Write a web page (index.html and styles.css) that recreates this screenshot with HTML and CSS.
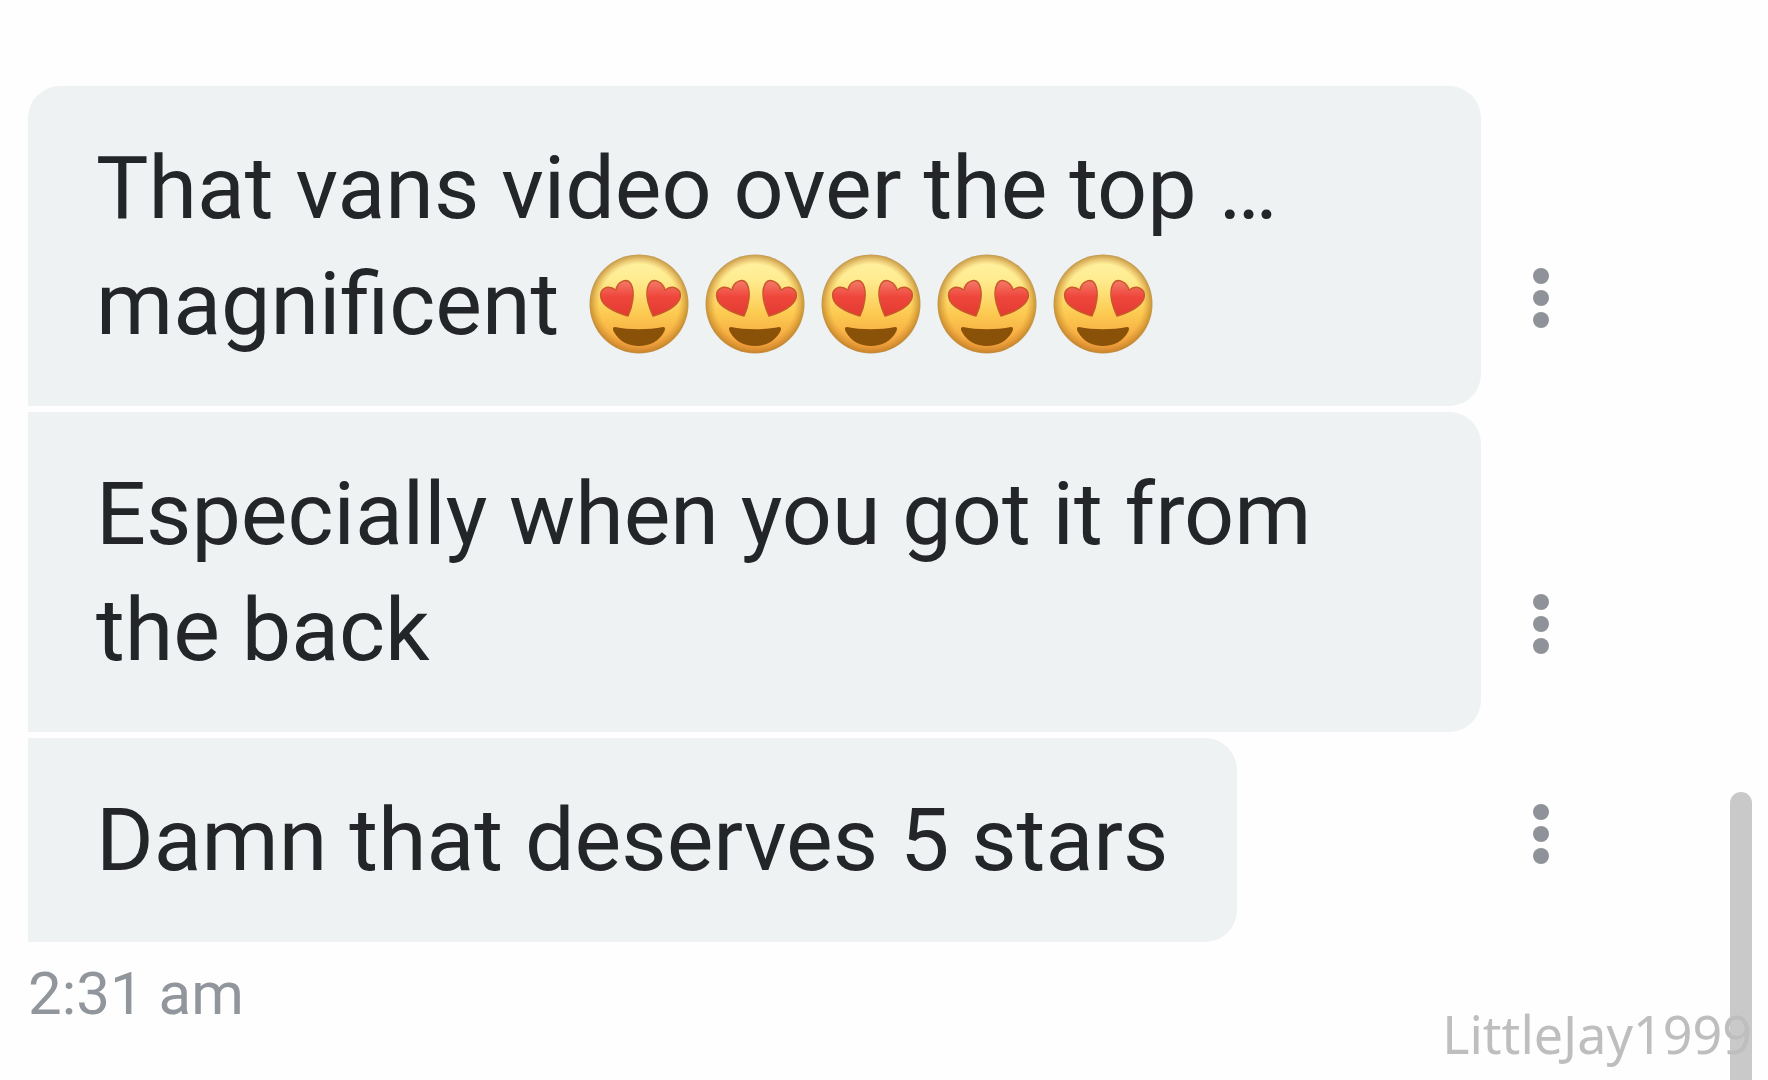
FILE: index.html
```html
<!DOCTYPE html>
<html lang="en">
<head>
    <meta charset="UTF-8">
    <meta name="viewport" content="width=device-width, initial-scale=1.0">
    <title>Messages</title>
    <link rel="stylesheet" href="styles.css">
</head>
<body>

<!-- shared drawing for the heart eyes emoji -->
<svg class="defs" width="0" height="0" aria-hidden="true">
    <defs>
        <linearGradient id="face" x1="0" y1="0" x2="0" y2="1">
            <stop offset="0" stop-color="#fff3a6"/>
            <stop offset="0.25" stop-color="#ffec90"/>
            <stop offset="0.6" stop-color="#fcca50"/>
            <stop offset="1" stop-color="#f3993a"/>
        </linearGradient>
        <radialGradient id="edge">
            <stop offset="0.8" stop-color="#d98a28" stop-opacity="0"/>
            <stop offset="1" stop-color="#b07a26" stop-opacity="0.75"/>
        </radialGradient>
        <linearGradient id="heart" x1="0" y1="0" x2="0" y2="1">
            <stop offset="0" stop-color="#f27a68"/>
            <stop offset="0.45" stop-color="#f0473d"/>
            <stop offset="1" stop-color="#e23a30"/>
        </linearGradient>
        <symbol id="heart-eyes" viewBox="0 0 100 100">
            <circle cx="50" cy="50" r="49" fill="url(#face)"/>
            <circle cx="50" cy="50" r="49.5" fill="url(#edge)"/>
            <g fill="url(#heart)" stroke="#c9572b" stroke-width="1.5" stroke-linejoin="round">
                <path d="M39 62C29 59 14 53 12 44C10 35 18 30 27 36C28 28 38 23 42 30C46 38 44 51 39 62Z"/>
                <path d="M64 62C74 59 88 53 91 44C93 35 84 30 76 36C74 28 64 23 60 30C56 38 59 51 64 62Z"/>
            </g>
            <path d="M26 73C40 76 60 76 74 73C77 73 76 76 75 78C70 87 61 92 50 92C39 92 30 87 25 78C24 76 23 73 26 73Z" fill="#8a5109"/>
        </symbol>
    </defs>
</svg>

<main class="thread">
    <div class="row">
        <div class="bubble first">That vans video over the top … magnificent <span class="emojis" role="img" aria-label="heart eyes"><svg class="emoji"><use href="#heart-eyes"/></svg><svg class="emoji"><use href="#heart-eyes"/></svg><svg class="emoji"><use href="#heart-eyes"/></svg><svg class="emoji"><use href="#heart-eyes"/></svg><svg class="emoji"><use href="#heart-eyes"/></svg></span></div>
        <button class="more" type="button" aria-label="Message options">
            <svg class="dots" viewBox="0 0 16 60"><circle cx="8" cy="8" r="8"/><circle cx="8" cy="30" r="8"/><circle cx="8" cy="52" r="8"/></svg>
        </button>
    </div>
    <div class="row">
        <div class="bubble">Especially when you got it from the back</div>
        <button class="more" type="button" aria-label="Message options">
            <svg class="dots" viewBox="0 0 16 60"><circle cx="8" cy="8" r="8"/><circle cx="8" cy="30" r="8"/><circle cx="8" cy="52" r="8"/></svg>
        </button>
    </div>
    <div class="row">
        <div class="bubble">Damn that deserves 5 stars</div>
        <button class="more" type="button" aria-label="Message options">
            <svg class="dots" viewBox="0 0 16 60"><circle cx="8" cy="8" r="8"/><circle cx="8" cy="30" r="8"/><circle cx="8" cy="52" r="8"/></svg>
        </button>
    </div>
    <time class="time">2:31 am</time>
</main>

<div class="scroll-thumb"></div>
<div class="watermark">LittleJay1999</div>

</body>
</html>
```
FILE: styles.css
```css
* {
    box-sizing: border-box;
}
body {
    margin: 0;
    min-height: 100vh;
    background-color: #fefefe;
    color: #242529;
    font-family: Roboto, "Liberation Sans", sans-serif;
    overflow: hidden;
}
.defs {
    position: absolute;
}
.thread {
    display: flex;
    flex-direction: column;
    gap: 6px;
    padding: 86px 197px 0 28px;
}
.row {
    display: flex;
    align-items: flex-end;
    justify-content: space-between;
    gap: 30px;
}
.bubble {
    padding: 44px 68px;
    background-color: #eef2f3;
    border-radius: 0 32px 32px 0;
    font-size: 88px;
    line-height: 116px;
}
.bubble.first {
    border-top-left-radius: 32px;
}
.emojis {
    white-space: nowrap;
}
.emoji {
    width: 100px;
    height: 100px;
    margin: 0 8px;
    vertical-align: -20px;
}
.more {
    flex: none;
    display: flex;
    align-items: center;
    justify-content: center;
    width: 60px;
    height: 120px;
    margin-bottom: 48px;
    padding: 0;
    border: 0;
    background: none;
    cursor: pointer;
}
.dots {
    width: 16px;
    height: 60px;
    fill: #8f9399;
}
.time {
    margin-top: 10px;
    color: #90969c;
    font-size: 60px;
    line-height: 72px;
}
/* overlays */
.scroll-thumb {
    position: fixed;
    top: 792px;
    right: 16px;
    bottom: 0;
    width: 22px;
    border-radius: 11px 11px 0 0;
    background-color: #c9c9c9;
}
.watermark {
    position: fixed;
    right: 16px;
    bottom: 12px;
    color: #bebebe;
    font-family: "Noto Sans", "Open Sans", sans-serif;
    font-size: 52px;
    line-height: 68px;
}
```
